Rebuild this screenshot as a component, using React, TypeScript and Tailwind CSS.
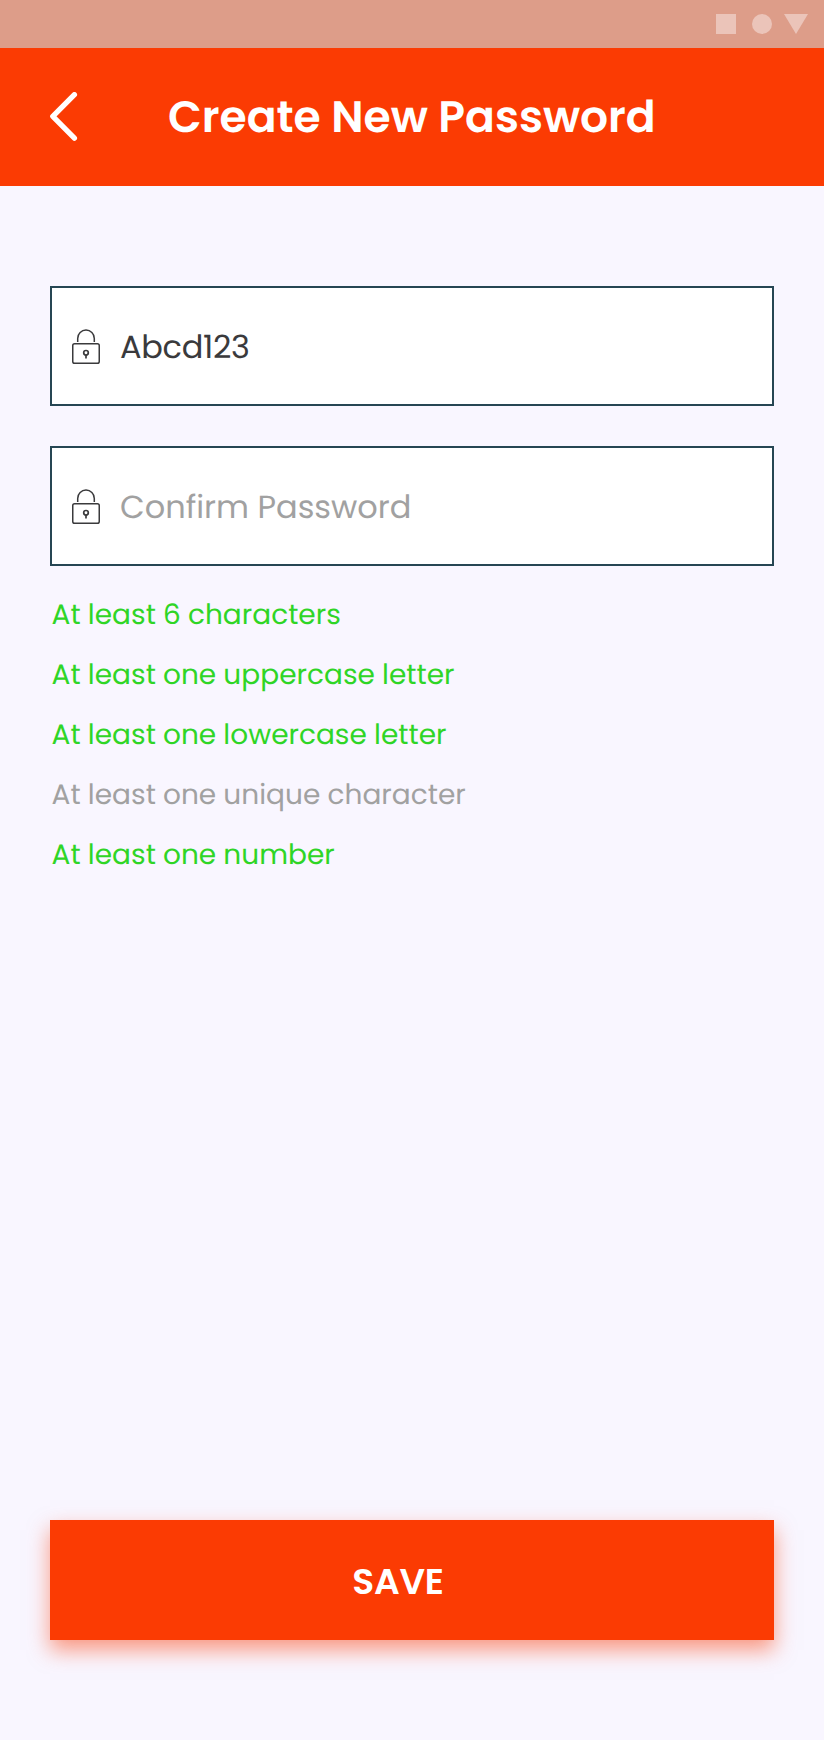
const rules = [
  { text: "At least 6 characters", met: true },
  { text: "At least one uppercase letter", met: true },
  { text: "At least one lowercase letter", met: true },
  { text: "At least one unique character", met: false },
  { text: "At least one number", met: true },
];

function LockIcon() {
  return (
    <svg className="h-[36px] w-[28px] shrink-0" viewBox="0 0 28 36" fill="none" stroke="#3a3a3c" strokeWidth="1.5">
      <path d="M5.7 13V9.4a8.3 8.3 0 0 1 16.6 0V13" />
      <rect x="0.75" y="14.7" width="26.5" height="19.6" rx="1.8" />
      <circle cx="14" cy="23.8" r="2.3" strokeWidth="1.7" />
      <path d="M14 26v3.6" strokeWidth="1.7" />
    </svg>
  );
}

export default function App() {
  return (
    <div className="flex h-[1740px] w-[824px] flex-col bg-[#f9f6ff] font-['Poppins','Inter',sans-serif] antialiased [text-rendering:geometricPrecision]">
      <div className="flex h-12 items-center justify-end bg-[#dd9d89] pr-4">
        <svg className="h-5 w-[92px]" viewBox="0 0 92 20" fill="#ebc4b9">
          <rect width="20" height="20" />
          <circle cx="46" cy="10" r="10" />
          <path d="M68 0h24L80 20z" />
        </svg>
      </div>
      <header className="flex h-[138px] items-center bg-[#fb3b03] pl-[50px]">
        <svg className="h-[50px] w-[28px]" viewBox="0 0 28 50" fill="none" stroke="#fff" strokeWidth="5.3" strokeLinecap="round" strokeLinejoin="round">
          <path d="M24.4 2.7L2.8 24.4L24.4 46.2" />
        </svg>
        <h1 className="ml-[90px] pt-[2px] text-[44px] font-semibold whitespace-nowrap text-white">Create New Password</h1>
      </header>
      <main className="flex flex-1 flex-col px-[50px] pt-[100px] pb-[100px]">
        <div className="flex h-[120px] items-center border-2 border-[#264653] bg-white pt-[2px] pl-5">
          <LockIcon />
          <span className="ml-5 pt-[2px] text-[32px] tracking-[-0.3px] text-[#3a3a3c]">Abcd123</span>
        </div>
        <div className="mt-10 flex h-[120px] items-center border-2 border-[#264653] bg-white pt-[2px] pl-5">
          <LockIcon />
          <span className="ml-5 pt-[2px] text-[32px] text-[#a1a1a1]">Confirm Password</span>
        </div>
        <ul className="mt-[19px] pl-[1.6px] text-[28px] leading-[60px] [word-spacing:-0.3px]">
          {rules.map((rule) => (
            <li key={rule.text} className={rule.met ? "text-[#2fd526]" : "text-[#a1a1a1]"}>
              {rule.text}
            </li>
          ))}
        </ul>
        <button className="mt-auto flex h-[120px] items-center justify-center bg-[#fb3b03] pt-[4px] pr-7 text-[36px] font-semibold tracking-[-0.2px] text-white shadow-[0_10px_20px_rgba(252,59,5,0.5)]">
          SAVE
        </button>
      </main>
    </div>
  );
}
